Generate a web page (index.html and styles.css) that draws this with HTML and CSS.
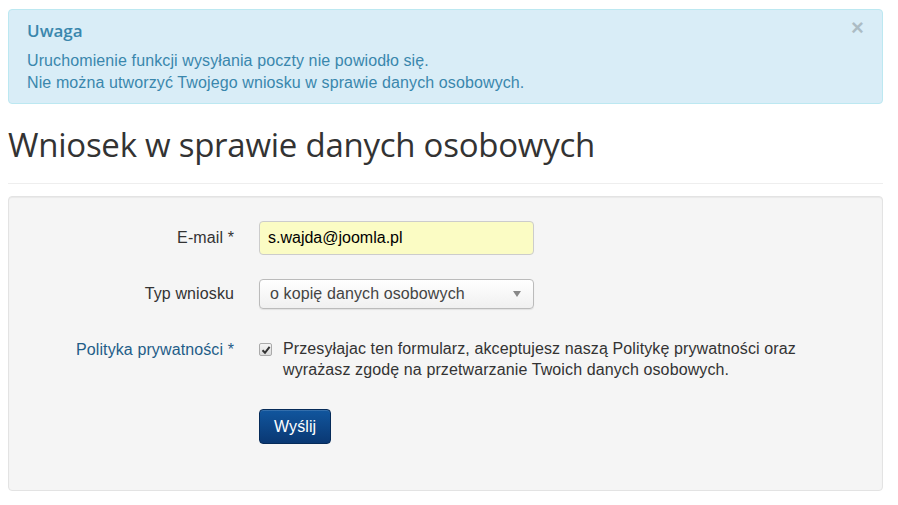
FILE: index.html
```html
<!DOCTYPE html>
<html lang="pl">
<head>
<meta charset="utf-8">
<title>Wniosek w sprawie danych osobowych</title>
<link rel="stylesheet" href="styles.css">
</head>
<body>
<div class="page">
  <div class="alert">
    <span class="close">×</span>
    <h4 class="alert-title">Uwaga</h4>
    <div class="alert-msg">
      <div>Uruchomienie funkcji wysyłania poczty nie powiodło się.</div>
      <div>Nie można utworzyć Twojego wniosku w sprawie danych osobowych.</div>
    </div>
  </div>
  <h1 class="page-title">Wniosek w sprawie danych osobowych</h1>
  <hr class="sep">
  <form class="well">
    <div class="row row-email">
      <label class="control-label">E-mail *</label>
      <div class="controls"><input class="input input-auto" type="text" value="s.wajda@joomla.pl"></div>
    </div>
    <div class="row row-type">
      <label class="control-label">Typ wniosku</label>
      <div class="controls">
        <div class="select"><span>o kopię danych osobowych</span><span class="caret"></span></div>
      </div>
    </div>
    <div class="row row-policy">
      <label class="control-label label-link">Polityka prywatności *</label>
      <div class="controls policy">
        <span class="checkbox"><svg width="10" height="10" viewBox="0 0 10 10"><path d="M1.5 5.2 L4 7.8 L8.6 1.8" fill="none" stroke="#333" stroke-width="2"/></svg></span>
        <span class="policy-text">Przesyłajac ten formularz, akceptujesz naszą Politykę prywatności oraz wyrażasz zgodę na przetwarzanie Twoich danych osobowych.</span>
      </div>
    </div>
    <div class="row row-btn">
      <div class="control-label"></div>
      <div class="controls"><button type="button" class="btn">Wyślij</button></div>
    </div>
  </form>
</div>
</body>
</html>
```
FILE: styles.css
```css
html, body {
  margin: 0;
  padding: 0;
  background: #fff;
}
body {
  font-family: "Liberation Sans", Arial, sans-serif;
  font-size: 16px;
  letter-spacing: 0.11px;
  color: #333;
}
.page {
  padding: 9px 15px 0 8px;
}
.alert {
  position: relative;
  background: #d9edf7;
  border: 1px solid #bce8f1;
  border-radius: 4px;
  color: #3a87ad;
  padding: 10px 40px 11px 18px;
  height: 72px;
}
.close {
  position: absolute;
  right: 18px;
  top: 4px;
  font-family: "Liberation Sans", Arial, sans-serif;
  font-size: 22px;
  font-weight: bold;
  color: #000;
  opacity: 0.2;
  line-height: 28px;
}
.alert-title {
  margin: 0;
  font-family: "Open Sans", sans-serif;
  font-weight: 600;
  font-size: 17px;
  line-height: 22px;
  letter-spacing: 0;
  color: #3a87ad;
}
.alert-msg {
  margin-top: 8px;
  line-height: 22px;
}
.page-title {
  margin: 19px 0 0 0;
  font-family: "Open Sans", sans-serif;
  font-weight: 400;
  font-size: 33px;
  line-height: 44px;
  color: #333;
  letter-spacing: -0.25px;
}
.sep {
  margin: 16px 0 12px 0;
  border: 0;
  border-top: 1px solid #eee;
  height: 0;
}
.well {
  margin: 0;
  background: #f5f5f5;
  border: 1px solid #e3e3e3;
  border-radius: 4px;
  box-shadow: inset 0 1px 1px rgba(0,0,0,0.05);
  padding: 24px 0 45px 0;
  height: 224px;
}
.row {
  display: flex;
  align-items: center;
}
.control-label {
  width: 225px;
  text-align: right;
  flex: none;
}
.controls {
  margin-left: 25px;
}
.row-type {
  margin-top: 24px;
}
.row-policy {
  margin-top: 29px;
  align-items: flex-start;
}
.row-policy .control-label {
  padding-top: 3px;
}
.row-btn {
  margin-top: 29px;
}
.label-link {
  color: #1f5d88;
}
.input {
  box-sizing: border-box;
  width: 275px;
  height: 34px;
  border: 1px solid #ccc;
  border-radius: 4px;
  padding: 4px 8px;
  font-family: "Liberation Sans", Arial, sans-serif;
  font-size: 16px;
  color: #000;
  outline: none;
}
.input-auto {
  background: #fbfcc4;
}
.select {
  box-sizing: border-box;
  width: 275px;
  height: 30px;
  border: 1px solid #bbb;
  border-radius: 4px;
  background: linear-gradient(#ffffff, #f0f0f0);
  box-shadow: 0 1px 1px rgba(0,0,0,0.08);
  display: flex;
  align-items: center;
  justify-content: space-between;
  padding: 0 12px 0 10px;
  font-size: 16px;
  color: #444;
}
.caret {
  width: 0;
  height: 0;
  border-left: 4px solid transparent;
  border-right: 4px solid transparent;
  border-top: 6px solid #888;
}
.policy {
  display: flex;
  align-items: flex-start;
  width: 580px;
}
.checkbox {
  box-sizing: border-box;
  flex: none;
  width: 13px;
  height: 13px;
  margin: 5px 11px 0 0;
  border: 1px solid #aaa;
  border-radius: 2px;
  background: linear-gradient(#f4f4f4, #dcdcdc);
  display: flex;
  align-items: center;
  justify-content: center;
}
.policy-text {
  line-height: 21px;
  color: #333;
}
.btn {
  box-sizing: border-box;
  height: 35px;
  padding: 0 14px;
  border: 1px solid #062b59;
  border-radius: 4px;
  background: linear-gradient(#11569e, #0a3873);
  color: #fff;
  font-family: "Liberation Sans", Arial, sans-serif;
  font-size: 16px;
  letter-spacing: 0.11px;
  box-shadow: inset 0 1px 0 rgba(255,255,255,0.15);
}
```
